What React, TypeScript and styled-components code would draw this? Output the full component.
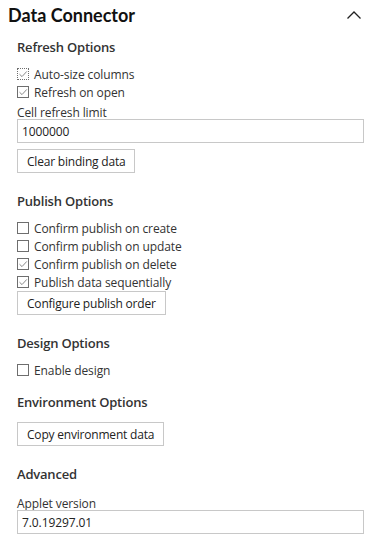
import styled, { createGlobalStyle } from "styled-components";

const GlobalStyle = createGlobalStyle`
    body {
        margin: 0;
        background: #ffffff;
        font-family: "Open Sans", "Noto Sans", sans-serif;
        color: #333333;
    }
`;

type CheckState = "off" | "on" | "focus";

const Check = ({ state, label }: { state: CheckState; label: string }) => (
    <CheckRow>
        <Box $focus={state === "focus"}>
            {state !== "off" && (
                <svg width="10" height="10" viewBox="0 0 10 10">
                    <path d="M1.5 5.2 L4 7.6 L8.8 2.4" fill="none" stroke="#8a8a8a" strokeWidth="1" />
                </svg>
            )}
        </Box>
        <CheckLabel>{label}</CheckLabel>
    </CheckRow>
);

const App = () => {
    return (
        <>
            <GlobalStyle />
            <Panel>
                <Header>
                    <Title>Data Connector</Title>
                    <svg width="16" height="10" viewBox="0 0 16 10">
                        <path d="M1.5 8.5 L8 2 L14.5 8.5" fill="none" stroke="#222" strokeWidth="1.3" />
                    </svg>
                </Header>
                <Body>
                    <Section $bottom={11}>
                        <SectionTitle>Refresh Options</SectionTitle>
                        <Checks>
                            <Check state="focus" label="Auto-size columns" />
                            <Check state="on" label="Refresh on open" />
                        </Checks>
                        <Field $gap={5}>
                            <FieldLabel>Cell refresh limit</FieldLabel>
                            <Input defaultValue="1000000" />
                        </Field>
                        <Button>Clear binding data</Button>
                    </Section>

                    <Section $bottom={11}>
                        <SectionTitle>Publish Options</SectionTitle>
                        <Checks>
                            <Check state="off" label="Confirm publish on create" />
                            <Check state="off" label="Confirm publish on update" />
                            <Check state="on" label="Confirm publish on delete" />
                            <Check state="on" label="Publish data sequentially" />
                        </Checks>
                        <Button>Configure publish order</Button>
                    </Section>

                    <Section $bottom={6}>
                        <SectionTitle>Design Options</SectionTitle>
                        <Checks>
                            <Check state="off" label="Enable design" />
                        </Checks>
                    </Section>

                    <Section $bottom={11}>
                        <SectionTitle>Environment Options</SectionTitle>
                        <Button $spaced>Copy environment data</Button>
                    </Section>

                    <Section>
                        <SectionTitle>Advanced</SectionTitle>
                        <Field $gap={5}>
                            <FieldLabel>Applet version</FieldLabel>
                            <Input defaultValue="7.0.19297.01" />
                        </Field>
                    </Section>
                </Body>
            </Panel>
        </>
    );
};

export default App;

const Panel = styled.div`
    width: 374px;
    padding: 0 10px 0 8px;
    box-sizing: border-box;
`;

const Header = styled.div`
    display: flex;
    align-items: center;
    justify-content: space-between;
    height: 30px;
    padding-right: 2px;
`;

const Title = styled.h1`
    margin: 0;
    font-family: Lato, "Open Sans", sans-serif;
    font-size: 18px;
    font-weight: 700;
    color: #111111;
`;

const Body = styled.div`
    padding: 0 0 0 9px;
    display: flex;
    flex-direction: column;
`;

const Section = styled.section<{ $bottom?: number }>`
    display: flex;
    flex-direction: column;
    align-items: flex-start;
    padding-top: 8px;
    padding-bottom: ${(p) => p.$bottom ?? 12}px;
`;

const SectionTitle = styled.h2`
    margin: 0 0 9px;
    font-size: 13px;
    font-weight: 600;
    color: #333333;
    line-height: 18px;
    letter-spacing: -0.2px;
`;

const Checks = styled.div`
    display: flex;
    flex-direction: column;
`;

const CheckRow = styled.label`
    display: flex;
    align-items: center;
    gap: 5px;
    height: 18px;
`;

const Box = styled.span<{ $focus?: boolean }>`
    width: 12px;
    height: 12px;
    box-sizing: border-box;
    border: 1px ${(p) => (p.$focus ? "dotted" : "solid")} #6e6e6e;
    display: flex;
    align-items: center;
    justify-content: center;
    background: #ffffff;
`;

const CheckLabel = styled.span`
    font-size: 12px;
    color: #333333;
    letter-spacing: -0.1px;
`;

const Field = styled.div<{ $gap: number }>`
    display: flex;
    flex-direction: column;
    width: 100%;
    margin-top: ${(p) => p.$gap}px;
`;

const FieldLabel = styled.span`
    font-size: 12px;
    line-height: 13px;
    color: #333333;
    letter-spacing: -0.1px;
`;

const Input = styled.input`
    box-sizing: border-box;
    width: 100%;
    height: 24px;
    margin: 0 0 6px;
    padding: 0 4px;
    border: 1px solid #c8c8c8;
    font-family: inherit;
    font-size: 12px;
    color: #222222;
    letter-spacing: -0.1px;
    outline: none;
`;

const Button = styled.button<{ $spaced?: boolean }>`
    height: 24px;
    padding: 0 9px;
    margin-top: ${(p) => (p.$spaced ? "2px" : "0")};
    background: #ffffff;
    border: 1px solid #c8c8c8;
    font-family: inherit;
    font-size: 12px;
    color: #222222;
    letter-spacing: -0.2px;
`;
